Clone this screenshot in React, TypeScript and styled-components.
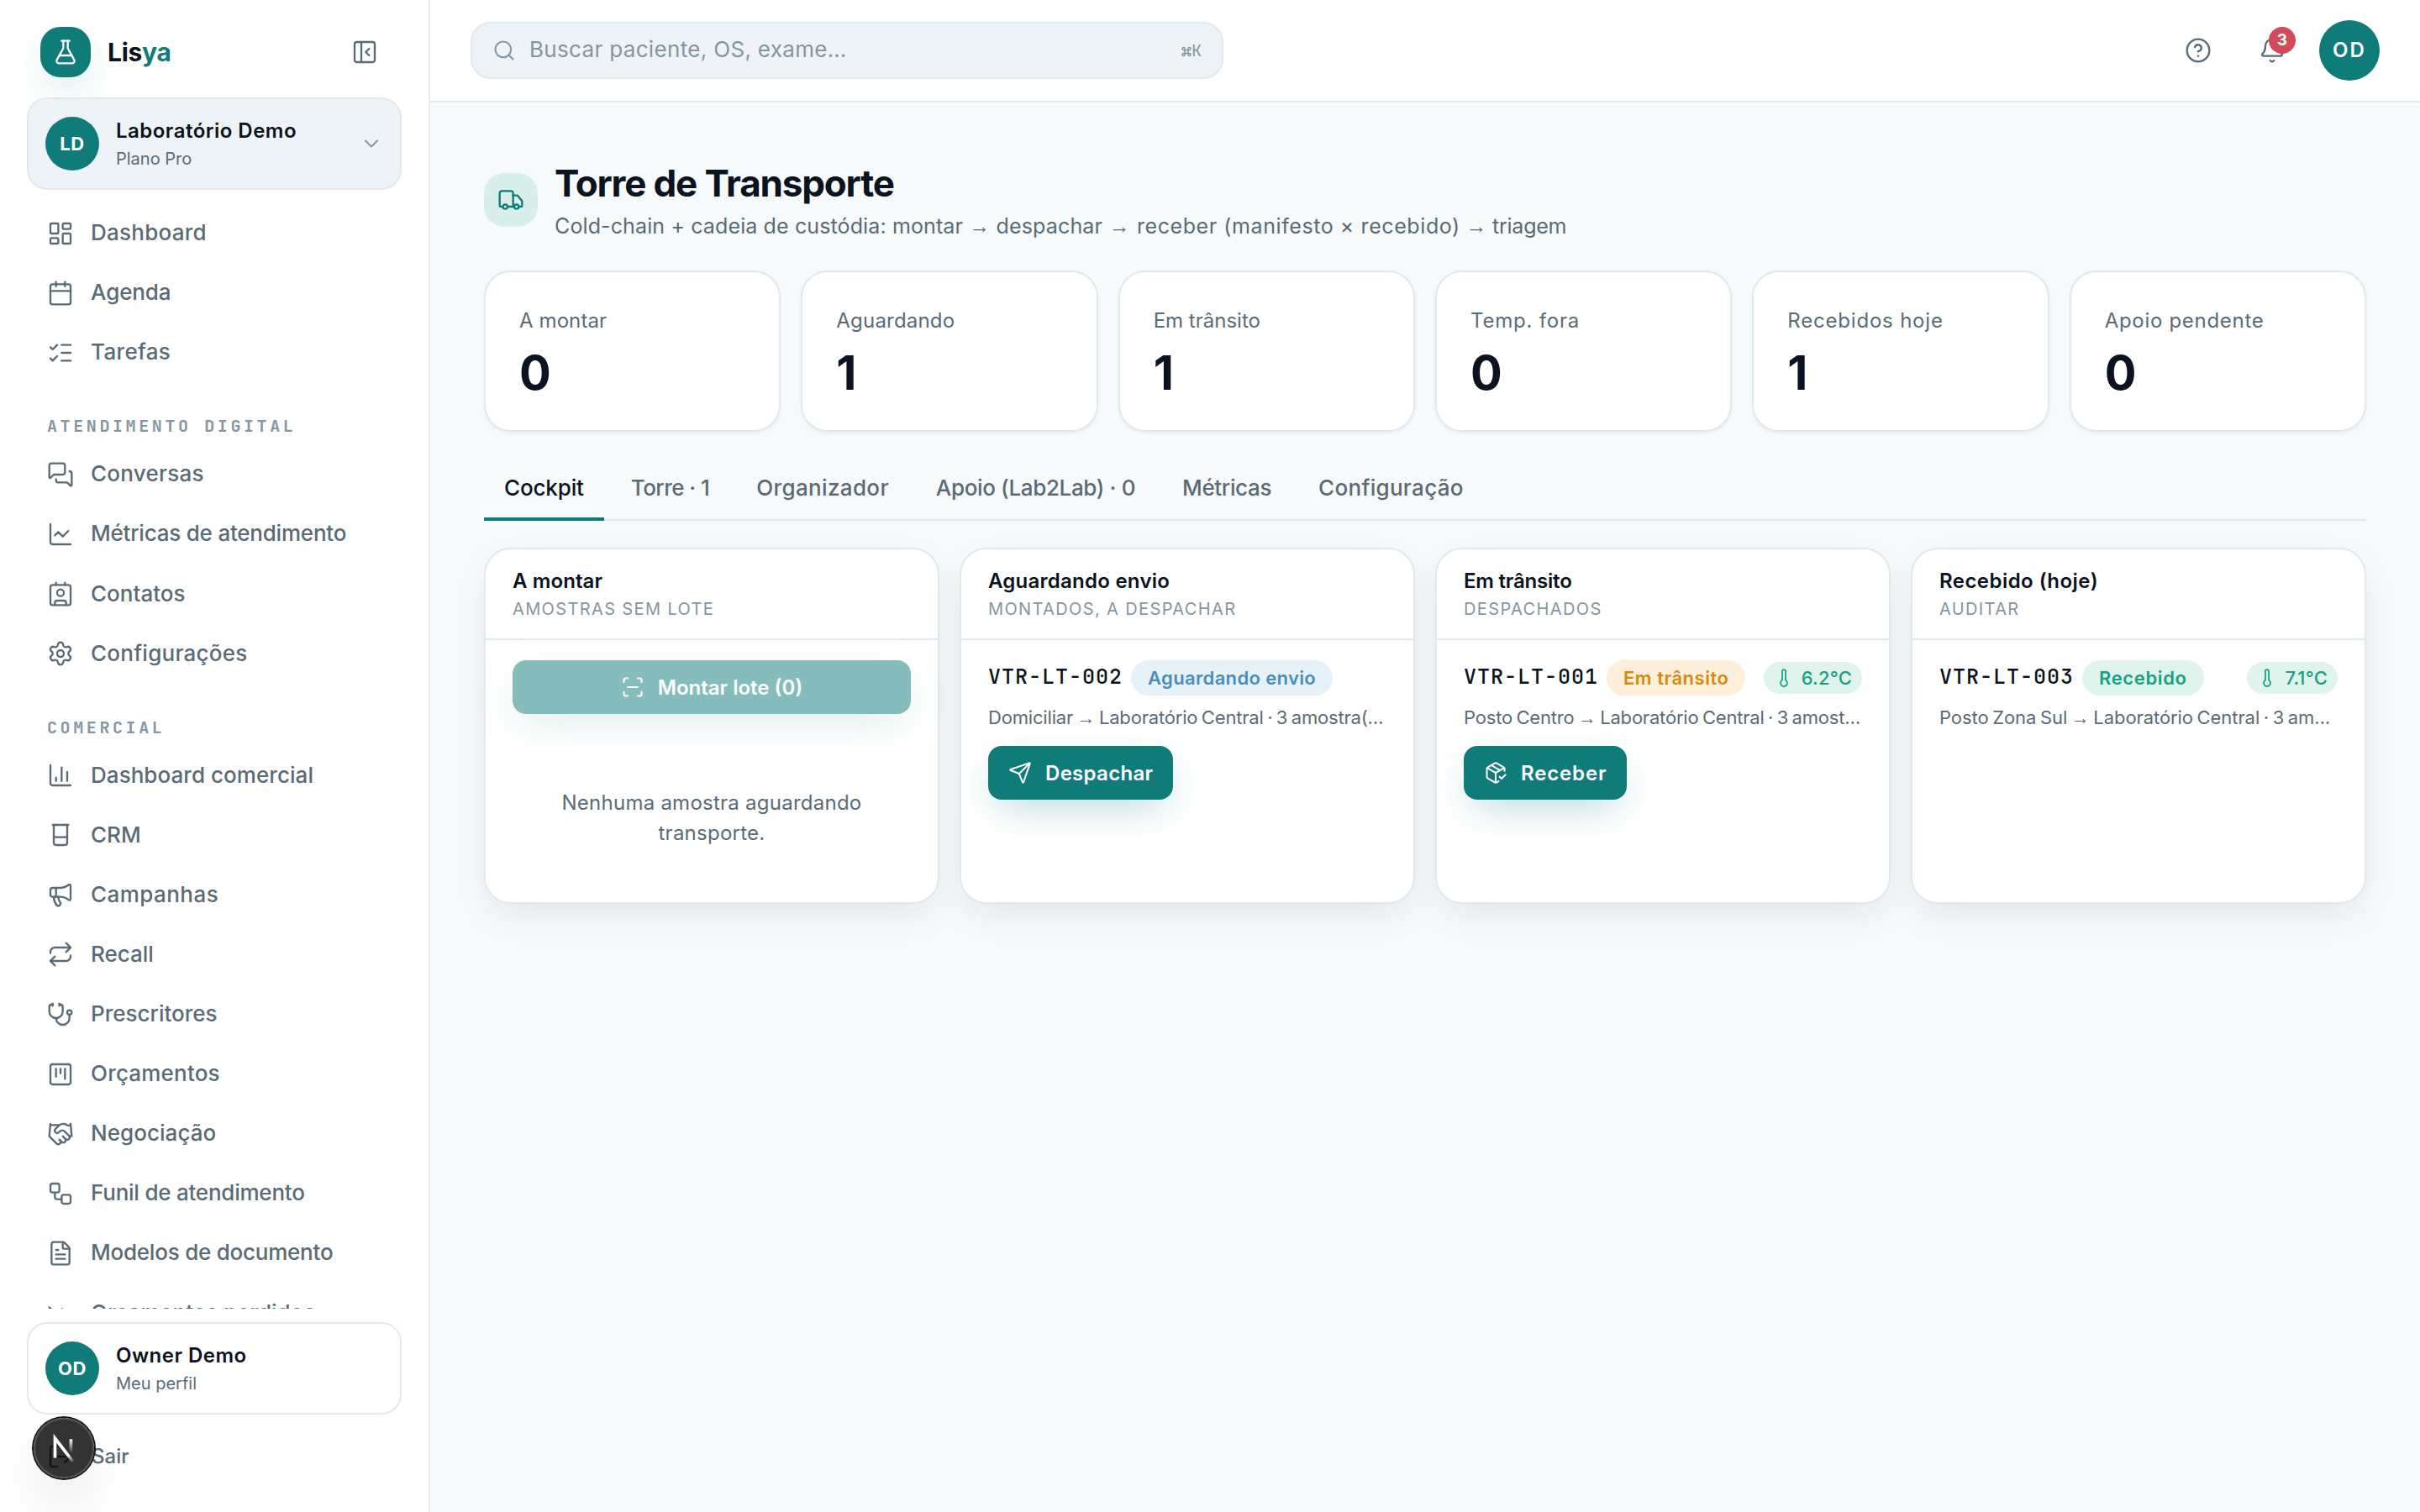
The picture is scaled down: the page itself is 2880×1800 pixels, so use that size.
import { FC, ReactNode } from "react";
import styled, { createGlobalStyle, css } from "styled-components";
import {
  Bell,
  Calendar,
  ChartColumn,
  ChartLine,
  ChevronDown,
  CircleQuestionMark,
  FileText,
  FlaskConical,
  Handshake,
  LayoutDashboard,
  ListChecks,
  LogOut,
  LucideIcon,
  Megaphone,
  MessagesSquare,
  PackageCheck,
  PanelLeftClose,
  Repeat,
  ScanLine,
  Search,
  Send,
  Settings,
  SquareKanban,
  Stethoscope,
  Thermometer,
  TrendingDown,
  Truck,
  Workflow,
} from "lucide-react";

type Tone = "info" | "warning" | "success";

// tracking is the letter spacing of a label, in pixels
interface ILabel {
  label: string;
  tracking?: number;
}

interface INavItem extends ILabel {
  icon: LucideIcon | FC<{ size?: number }>;
}

interface INavGroup {
  title?: string;
  items: INavItem[];
}

interface IBatch {
  code: string;
  status: ILabel;
  tone: Tone;
  from: string;
  to: ILabel;
  temp?: string;
  action?: ILabel & { icon: LucideIcon };
}

interface IColumn {
  title: ILabel;
  hint: string;
  batch?: IBatch;
}

const BeakerIcon: FC<{ size?: number }> = ({ size = 32 }) => (
  <svg
    width={size}
    height={size}
    viewBox="0 0 24 24"
    fill="none"
    stroke="currentColor"
    strokeWidth="1.75"
    strokeLinecap="round"
    strokeLinejoin="round"
  >
    <path d="M5 3h14" />
    <path d="M6 3v16a2 2 0 0 0 2 2h8a2 2 0 0 0 2-2V3" />
    <path d="M6 14h12" />
  </svg>
);

const ContactIcon: FC<{ size?: number }> = ({ size = 32 }) => (
  <svg
    width={size}
    height={size}
    viewBox="0 0 24 24"
    fill="none"
    stroke="currentColor"
    strokeWidth="1.75"
    strokeLinecap="round"
    strokeLinejoin="round"
  >
    <path d="M16 2v2" />
    <path d="M7 22v-2a2 2 0 0 1 2-2h6a2 2 0 0 1 2 2v2" />
    <path d="M8 2v2" />
    <circle cx="12" cy="11" r="3" />
    <rect x="3" y="4" width="18" height="18" rx="2" />
  </svg>
);

const navGroups: INavGroup[] = [
  {
    items: [
      { label: "Dashboard", tracking: 0.25, icon: LayoutDashboard },
      { label: "Agenda", tracking: -0.1, icon: Calendar },
      { label: "Tarefas", tracking: 0.33, icon: ListChecks },
    ],
  },
  {
    title: "Atendimento digital",
    items: [
      { label: "Conversas", tracking: 0.25, icon: MessagesSquare },
      { label: "Métricas de atendimento", tracking: -0.22, icon: ChartLine },
      { label: "Contatos", icon: ContactIcon },
      { label: "Configurações", tracking: 0.25, icon: Settings },
    ],
  },
  {
    title: "Comercial",
    items: [
      { label: "Dashboard comercial", tracking: 0.05, icon: ChartColumn },
      { label: "CRM", icon: BeakerIcon },
      { label: "Campanhas", tracking: 0.45, icon: Megaphone },
      { label: "Recall", icon: Repeat },
      { label: "Prescritores", icon: Stethoscope },
      { label: "Orçamentos", tracking: 0.2, icon: SquareKanban },
      { label: "Negociação", tracking: 0.05, icon: Handshake },
      { label: "Funil de atendimento", tracking: -0.23, icon: Workflow },
      { label: "Modelos de documento", tracking: -0.23, icon: FileText },
      { label: "Orçamentos perdidos", tracking: -0.05, icon: TrendingDown },
    ],
  },
];

const steps: ILabel[] = [
  { label: "Cold-chain + cadeia de custódia: montar", tracking: 0.12 },
  { label: "despachar", tracking: 0.15 },
  { label: "receber (manifesto × recebido)", tracking: 0.58 },
  { label: "triagem", tracking: -0.25 },
];

const stats = [
  { label: "A montar", value: 0, tracking: 0.1 },
  { label: "Aguardando", value: 1, tracking: 0.2 },
  { label: "Em trânsito", value: 1 },
  { label: "Temp. fora", value: 0, tracking: 0.8 },
  { label: "Recebidos hoje", value: 1, tracking: 0.8 },
  { label: "Apoio pendente", value: 0, tracking: 0.7 },
];

const tabs: ILabel[] = [
  { label: "Cockpit", tracking: -0.15 },
  { label: "Torre · 1", tracking: -0.55 },
  { label: "Organizador", tracking: 0.36 },
  { label: "Apoio (Lab2Lab) · 0", tracking: -0.36 },
  { label: "Métricas", tracking: -0.35 },
  { label: "Configuração", tracking: 0.3 },
];

const columns: IColumn[] = [
  { title: { label: "A montar", tracking: 0.1 }, hint: "Amostras sem lote" },
  {
    title: { label: "Aguardando envio", tracking: 0.25 },
    hint: "Montados, a despachar",
    batch: {
      code: "VTR-LT-002",
      status: { label: "Aguardando envio", tracking: 0.35 },
      tone: "info",
      from: "Domiciliar",
      to: { label: "Laboratório Central · 3 amostra(…", tracking: -0.18 },
      action: { label: "Despachar", tracking: 0.3, icon: Send },
    },
  },
  {
    title: { label: "Em trânsito", tracking: -0.2 },
    hint: "Despachados",
    batch: {
      code: "VTR-LT-001",
      status: { label: "Em trânsito", tracking: 0.5 },
      tone: "warning",
      from: "Posto Centro",
      to: { label: "Laboratório Central · 3 amostra(s)", tracking: -0.2 },
      temp: "6.2°C",
      action: { label: "Receber", tracking: 0.85, icon: PackageCheck },
    },
  },
  {
    title: { label: "Recebido (hoje)", tracking: 0.45 },
    hint: "Auditar",
    batch: {
      code: "VTR-LT-003",
      status: { label: "Recebido", tracking: 0.62 },
      tone: "success",
      from: "Posto Zona Sul",
      to: { label: "Laboratório Central · 3 amostra(s)", tracking: -0.07 },
      temp: "7.1°C",
    },
  },
];

const Account: FC<{
  initials: string;
  name: string;
  detail: string;
  muted?: boolean;
  children?: ReactNode;
}> = ({ initials, name, detail, muted = false, children }) => (
  <AccountCard $muted={muted}>
    <Avatar $size={64}>{initials}</Avatar>
    <div className="info">
      <strong>{name}</strong>
      <span>{detail}</span>
    </div>
    {children}
  </AccountCard>
);

const BatchItem: FC<{ batch: IBatch }> = ({ batch }) => (
  <>
    <BatchHead>
      <code>{batch.code}</code>
      <Pill $tone={batch.tone} $tracking={batch.status.tracking}>
        {batch.status.label}
      </Pill>
      {batch.temp && (
        <TempPill>
          <Thermometer size={24} />
          {batch.temp}
        </TempPill>
      )}
    </BatchHead>
    <Route $tracking={batch.to.tracking}>
      {batch.from} <Arrow>→</Arrow> {batch.to.label}
    </Route>
    {batch.action && (
      <Button $tracking={batch.action.tracking}>
        <batch.action.icon size={28} />
        {batch.action.label}
      </Button>
    )}
  </>
);

const App: FC = () => {
  return (
    <>
      <GlobalStyle />
      <Layout>
        <Sidebar>
          <Brand>
            <Logo>
              <FlaskConical size={32} />
            </Logo>
            <h2>
              Lis<span>ya</span>
            </h2>
            <PanelLeftClose size={32} />
          </Brand>
          <Account initials="LD" name="Laboratório Demo" detail="Plano Pro" muted>
            <ChevronDown size={28} />
          </Account>
          <Nav>
            {navGroups.map((group, i) => (
              <div key={i}>
                {group.title && <NavTitle>{group.title}</NavTitle>}
                {group.items.map((item) => (
                  <NavLink key={item.label} $tracking={item.tracking}>
                    <item.icon size={32} />
                    <span>{item.label}</span>
                  </NavLink>
                ))}
              </div>
            ))}
          </Nav>
          <Account initials="OD" name="Owner Demo" detail="Meu perfil" />
          <Logout>
            <LogOut size={32} />
            Sair
          </Logout>
        </Sidebar>

        <Content>
          <Topbar>
            <SearchBox>
              <Search size={28} />
              <span>Buscar paciente, OS, exame…</span>
              <kbd>⌘K</kbd>
            </SearchBox>
            <Actions>
              <IconButton>
                <CircleQuestionMark size={32} />
              </IconButton>
              <IconButton>
                <Bell size={32} />
                <Badge>3</Badge>
              </IconButton>
              <Avatar $size={72}>OD</Avatar>
            </Actions>
          </Topbar>

          <Main>
            <PageHeader>
              <PageIcon>
                <Truck size={32} />
              </PageIcon>
              <div>
                <h1>Torre de Transporte</h1>
                <p>
                  {steps.map((step, i) => (
                    <Step key={step.label} $tracking={step.tracking}>
                      {i > 0 && (
                        <>
                          {" "}
                          <Arrow>→</Arrow>{" "}
                        </>
                      )}
                      {step.label}
                    </Step>
                  ))}
                </p>
              </div>
            </PageHeader>

            <Stats>
              {stats.map((stat) => (
                <StatCard key={stat.label} $tracking={stat.tracking}>
                  <span>{stat.label}</span>
                  <strong>{stat.value}</strong>
                </StatCard>
              ))}
            </Stats>

            <Tabs>
              {tabs.map((tab, i) => (
                <Tab key={tab.label} $active={i === 0} $tracking={tab.tracking}>
                  {tab.label}
                </Tab>
              ))}
            </Tabs>

            <Board>
              {columns.map((column) => (
                <Column key={column.hint}>
                  <header>
                    <ColumnTitle $tracking={column.title.tracking}>
                      {column.title.label}
                    </ColumnTitle>
                    <p>{column.hint}</p>
                  </header>
                  <ColumnBody>
                    {column.batch ? (
                      <BatchItem batch={column.batch} />
                    ) : (
                      <>
                        <Button $block disabled>
                          <ScanLine size={28} />
                          Montar lote (0)
                        </Button>
                        <Empty>Nenhuma amostra aguardando transporte.</Empty>
                      </>
                    )}
                  </ColumnBody>
                </Column>
              ))}
            </Board>
          </Main>
        </Content>
      </Layout>

      <DevBadge>
        <svg width="72" height="72" viewBox="0 0 36 36" fill="none">
          <g transform="translate(10.4 11.15)" strokeWidth="1.86">
            <path d="M13.3 15.2 L2.34 1 V12.6" stroke="url(#diagonal)" />
            <path d="M11.825 1.5 V13.1" stroke="url(#stem)" />
          </g>
          <defs>
            <linearGradient
              id="diagonal"
              x1="9.95"
              y1="11.12"
              x2="15.48"
              y2="17.97"
              gradientUnits="userSpaceOnUse"
            >
              <stop stopColor="white" />
              <stop offset="0.6" stopColor="white" stopOpacity="0" />
            </linearGradient>
            <linearGradient
              id="stem"
              x1="11.82"
              y1="1.4"
              x2="11.79"
              y2="9.63"
              gradientUnits="userSpaceOnUse"
            >
              <stop stopColor="white" />
              <stop offset="1" stopColor="white" stopOpacity="0" />
            </linearGradient>
          </defs>
        </svg>
      </DevBadge>
    </>
  );
};

const GlobalStyle = createGlobalStyle`
  :root {
    --bg: #f6fafb;
    --surface: #ffffff;
    --muted: #edf3f6;
    --border: #e0eaee;
    --text: #0b1220;
    --text-soft: #5a6b75;
    --text-faint: #8496a1;
    --primary: #0f7c7a;
    --mono: "JetBrains Mono", "DejaVu Sans Mono", monospace;
  }

  * {
    box-sizing: border-box;
    margin: 0;
    padding: 0;
  }

  body {
    background: var(--bg);
    color: var(--text);
    font-family: Inter, sans-serif;
    font-size: 28px;
    line-height: 1.5;
    overflow: hidden;
  }

  svg {
    flex-shrink: 0;
  }

  .lucide {
    stroke-width: 1.75;
  }
`;

interface ITracked {
  $tracking?: number;
}

const tracked = css<ITracked>`
  letter-spacing: ${(props) => props.$tracking ?? 0}px;
`;

const Layout = styled.div`
  display: flex;
  height: 1800px;
`;

const Sidebar = styled.aside`
  display: flex;
  flex-direction: column;
  width: 512px;
  flex-shrink: 0;
  padding: 32px 32px 0;
  background: var(--surface);
  border-right: 2px solid var(--border);
`;

const Brand = styled.div`
  display: flex;
  align-items: center;
  gap: 20px;
  padding: 0 28px 0 16px;
  margin-bottom: 24px;
  height: 60px;

  h2 {
    flex: 1;
    font-size: 30px;
    font-weight: 700;
    letter-spacing: -0.01em;
  }

  span {
    color: var(--primary);
  }

  > svg {
    color: var(--text-soft);
  }
`;

const Logo = styled.div`
  display: flex;
  align-items: center;
  justify-content: center;
  width: 60px;
  height: 60px;
  border-radius: 24px;
  background: var(--primary);
  color: #fff;
  box-shadow: 0 16px 48px -12px rgba(15, 124, 122, 0.3);
`;

const AccountCard = styled.div<{ $muted: boolean }>`
  display: flex;
  align-items: center;
  gap: 20px;
  height: 110px;
  flex-shrink: 0;
  padding: 0 20px;
  border: 2px solid var(--border);
  border-radius: 24px;
  background: ${(props) => (props.$muted ? "var(--muted)" : "var(--surface)")};

  .info {
    flex: 1;
    display: flex;
    flex-direction: column;
    padding-top: 2px;
  }

  strong {
    font-size: 24px;
    font-weight: 600;
    line-height: 34px;
    letter-spacing: 0.48px;
  }

  .info span {
    font-size: 20px;
    line-height: 32px;
    color: var(--text-soft);
  }

  > svg {
    color: var(--text-faint);
  }
`;

const Avatar = styled.div<{ $size: number }>`
  display: flex;
  align-items: center;
  justify-content: center;
  width: ${(props) => props.$size}px;
  height: ${(props) => props.$size}px;
  flex-shrink: 0;
  border-radius: 50%;
  background: var(--primary);
  color: #fff;
  font-size: ${(props) => (props.$size > 64 ? 24 : 22)}px;
  font-weight: ${(props) => (props.$size > 64 ? 600 : 700)};
  letter-spacing: ${(props) => (props.$size > 64 ? 2 : 0.6)}px;
`;

const Nav = styled.nav`
  flex: 1;
  min-height: 0;
  overflow: hidden;
  padding-top: 16px;
  margin-bottom: 16px;
`;

const NavTitle = styled.div`
  padding: 37px 24px 0;
  height: 74px;
  font-family: var(--mono);
  font-size: 20px;
  font-weight: 600;
  line-height: 30px;
  letter-spacing: 3.6px;
  text-transform: uppercase;
  color: var(--text-faint);
`;

const NavLink = styled.a<ITracked>`
  display: flex;
  align-items: center;
  gap: 20px;
  height: 71.1px;
  padding: 0 24px;
  font-size: 26px;
  font-weight: 500;
  white-space: nowrap;
  color: var(--text-soft);
  ${tracked}

  span {
    padding-bottom: 2px;
  }
`;

const Logout = styled.div`
  display: flex;
  align-items: center;
  gap: 21px;
  height: 100px;
  margin-bottom: 16px;
  padding: 0 24px;
  font-size: 24px;
  font-weight: 500;
  color: var(--text-soft);
`;

const Content = styled.div`
  flex: 1;
  min-width: 0;
`;

const Topbar = styled.header`
  display: flex;
  align-items: center;
  justify-content: space-between;
  height: 122px;
  padding: 0 48px;
  background: var(--surface);
  border-bottom: 2px solid var(--border);
`;

const SearchBox = styled.div`
  display: flex;
  align-items: center;
  gap: 16px;
  width: 896px;
  height: 68px;
  padding: 0 24px;
  border: 2px solid var(--border);
  border-radius: 24px;
  background: var(--muted);
  color: var(--text-faint);

  span {
    flex: 1;
    padding-bottom: 3px;
    font-size: 26px;
    letter-spacing: 0.33px;
  }

  kbd {
    font-family: var(--mono);
    font-size: 20px;
  }
`;

const Actions = styled.div`
  display: flex;
  align-items: center;
  gap: 8px;

  ${Avatar} {
    margin-left: 8px;
  }
`;

const IconButton = styled.button`
  position: relative;
  display: flex;
  align-items: center;
  justify-content: center;
  width: 80px;
  height: 80px;
  border: none;
  background: none;
  color: var(--text-soft);
`;

const Badge = styled.span`
  position: absolute;
  top: 12px;
  right: 12px;
  width: 32px;
  height: 32px;
  border-radius: 50%;
  background: #d14b5a;
  color: #fff;
  font: 700 19px/32px Inter, sans-serif;
  text-align: center;
`;

const Main = styled.main`
  padding: 64px;
`;

const PageHeader = styled.div`
  display: flex;
  align-items: center;
  gap: 20px;
  height: 104px;
  margin-bottom: 32px;

  h1 {
    font-size: 44px;
    font-weight: 700;
    line-height: 62px;
    letter-spacing: -1.18px;
  }

  p {
    font-size: 25px;
    line-height: 41px;
    color: var(--text-soft);
  }
`;

const Step = styled.span<ITracked>`
  ${tracked}
`;

const Arrow = styled.span`
  font-family: "Liberation Sans", sans-serif;
  line-height: 0;
`;

const PageIcon = styled.div`
  display: flex;
  align-items: center;
  justify-content: center;
  width: 64px;
  height: 64px;
  border-radius: 24px;
  background: #d8efec;
  color: var(--primary);
`;

const Stats = styled.div`
  display: grid;
  grid-template-columns: repeat(6, 1fr);
  gap: 24px;
`;

const StatCard = styled.div<ITracked>`
  display: flex;
  flex-direction: column;
  gap: 16px;
  height: 192px;
  padding: 40px;
  border: 2px solid var(--border);
  border-radius: 32px;
  background: var(--surface);
  box-shadow: 0 2px 4px rgba(15, 23, 42, 0.05);

  span {
    font-size: 24px;
    line-height: 36px;
    color: var(--text-soft);
    ${tracked}
  }

  strong {
    font-size: 56px;
    font-weight: 700;
    line-height: 56px;
  }
`;

const Tabs = styled.div`
  display: flex;
  gap: 8px;
  margin: 30px 0 32px;
  box-shadow: inset 0 -2px 0 var(--border);
`;

const Tab = styled.div<ITracked & { $active: boolean }>`
  height: 76px;
  padding: 1px 24px 0;
  border-bottom: 4px solid transparent;
  font-size: 26px;
  font-weight: 500;
  line-height: 72px;
  white-space: nowrap;
  color: var(--text-soft);
  ${tracked}

  ${(props) =>
    props.$active &&
    css`
      color: var(--text);
      border-color: var(--primary);
    `}
`;

const Board = styled.div`
  display: grid;
  grid-template-columns: repeat(4, 1fr);
  gap: 24px;
`;

const Column = styled.section`
  min-width: 0;
  border: 2px solid var(--border);
  border-radius: 32px;
  background: var(--surface);
  box-shadow: 0 16px 48px -12px rgba(15, 23, 42, 0.12);

  header {
    height: 108px;
    padding: 20px 32px 0;
    border-bottom: 2px solid var(--border);
  }

  header p {
    font-size: 20px;
    line-height: 30px;
    letter-spacing: 1.37px;
    text-transform: uppercase;
    color: var(--text-faint);
  }
`;

const ColumnTitle = styled.h3<ITracked>`
  font-size: 24px;
  font-weight: 600;
  line-height: 36px;
  ${tracked}
`;

const ColumnBody = styled.div`
  padding: 24px 32px;
`;

const BatchHead = styled.div`
  display: flex;
  align-items: center;
  height: 42px;
  gap: 10px;

  code {
    height: 40px;
    font-family: var(--mono);
    font-size: 25px;
    font-weight: 500;
    line-height: 37px;
    letter-spacing: 1px;
  }
`;

const tones = {
  info: css`
    background: #e6f1f8;
    color: #4a8dbd;
  `,
  warning: css`
    background: #fdefd9;
    color: #d68a0c;
  `,
  success: css`
    background: #def4ec;
    color: #18a085;
  `,
};

const Pill = styled.span<ITracked & { $tone: Tone }>`
  height: 42px;
  padding: 0 20px;
  border-radius: 21px;
  font-size: 22px;
  font-weight: 600;
  line-height: 42px;
  white-space: nowrap;
  ${(props) => tones[props.$tone]}
  ${tracked}
`;

const TempPill = styled.span`
  display: flex;
  align-items: center;
  gap: 9px;
  height: 38px;
  margin-left: auto;
  padding: 0 12px;
  border-radius: 19px;
  font-size: 22px;
  font-weight: 500;
  letter-spacing: 0.2px;
  ${tones.success}
`;

const Route = styled.p<ITracked>`
  margin: 9px 0 17px;
  font-size: 22px;
  line-height: 34px;
  word-spacing: -1.5px;
  color: var(--text-soft);
  overflow: hidden;
  white-space: nowrap;
  text-overflow: ellipsis;
  ${tracked}
`;

const Button = styled.button<ITracked & { $block?: boolean }>`
  display: flex;
  align-items: center;
  justify-content: center;
  gap: 16px;
  width: ${(props) => (props.$block ? "100%" : "auto")};
  height: 64px;
  padding: 0 24px;
  border: none;
  border-radius: 16px;
  background: var(--primary);
  color: #fff;
  font: 600 24px Inter, sans-serif;
  box-shadow: 0 16px 48px -12px rgba(15, 124, 122, 0.35);
  ${tracked}

  &:disabled {
    opacity: 0.5;
  }
`;

const Empty = styled.p`
  padding: 88px 32px 40px;
  font-size: 24px;
  line-height: 36px;
  letter-spacing: 0.25px;
  text-align: center;
  color: var(--text-soft);
`;

const DevBadge = styled.div`
  position: fixed;
  left: 40px;
  bottom: 40px;
  width: 72px;
  height: 72px;
  border-radius: 50%;
  background: rgba(0, 0, 0, 0.8);
  box-shadow:
    0 0 0 2px #171717,
    inset 0 0 0 2px rgba(255, 255, 255, 0.14),
    0 32px 64px -16px rgba(0, 0, 0, 0.24);
`;

export default App;
